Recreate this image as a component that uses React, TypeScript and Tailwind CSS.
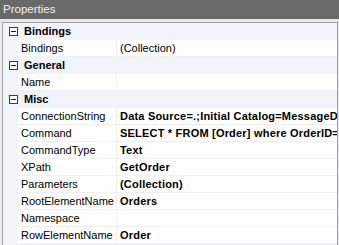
type Prop = { name: string; value?: string; bold?: boolean };
type Group = { title: string; props: Prop[] };

const groups: Group[] = [
  { title: 'Bindings', props: [{ name: 'Bindings', value: '(Collection)' }] },
  { title: 'General', props: [{ name: 'Name' }] },
  {
    title: 'Misc',
    props: [
      { name: 'ConnectionString', value: 'Data Source=.;Initial Catalog=MessageDb', bold: true },
      { name: 'Command', value: 'SELECT * FROM [Order] where OrderID=@id', bold: true },
      { name: 'CommandType', value: 'Text', bold: true },
      { name: 'XPath', value: 'GetOrder', bold: true },
      { name: 'Parameters', value: '(Collection)', bold: true },
      { name: 'RootElementName', value: 'Orders', bold: true },
      { name: 'Namespace' },
      { name: 'RowElementName', value: 'Order', bold: true },
    ],
  },
];

function MinusBox() {
  return (
    <span className="w-[9px] h-[9px] border border-[#3c3c3c] bg-white flex items-center justify-center shrink-0">
      <span className="w-[5px] h-px bg-[#1e1e1e]" />
    </span>
  );
}

export default function App() {
  return (
    <div className="w-[339px] h-[245px] overflow-hidden bg-[#e9e9ee] text-[11px] text-black" style={{ fontFamily: '"Liberation Sans", Arial, sans-serif' }}>
      <div className="h-[19px] bg-[#696969] text-[#f2f2f2] text-[11.5px] leading-[19px] pl-[3px]">Properties</div>
      <div className="h-[3px] bg-[#e9e9ee]" />
      <div className="ml-[2px] w-[336px] h-[223px] border-l border-r border-t border-[#a0a0a0] bg-[#f0f4fa] overflow-hidden">
        {groups.map((g) => (
          <div key={g.title}>
            <div className="h-[17px] flex items-center">
              <span className="w-[18px] flex justify-center pl-[2px]">
                <MinusBox />
              </span>
              <span className="pl-[3px] font-bold">{g.title}</span>
            </div>
            {g.props.map((p) => (
              <div key={p.name} className="h-[17px] flex">
                <div className="w-[15px] shrink-0" />
                <div className="w-[98px] shrink-0 bg-white border-b border-[#f0f0f0] pl-[3px] leading-[16px] whitespace-nowrap overflow-hidden">{p.name}</div>
                <div className="w-px shrink-0 bg-[#f0f0f0]" />
                <div className={`flex-1 bg-white border-b border-[#f0f0f0] pl-[3px] leading-[16px] whitespace-nowrap overflow-hidden ${p.bold ? 'font-bold tracking-[0.2px]' : ''}`}>{p.value}</div>
              </div>
            ))}
          </div>
        ))}
      </div>
    </div>
  );
}
